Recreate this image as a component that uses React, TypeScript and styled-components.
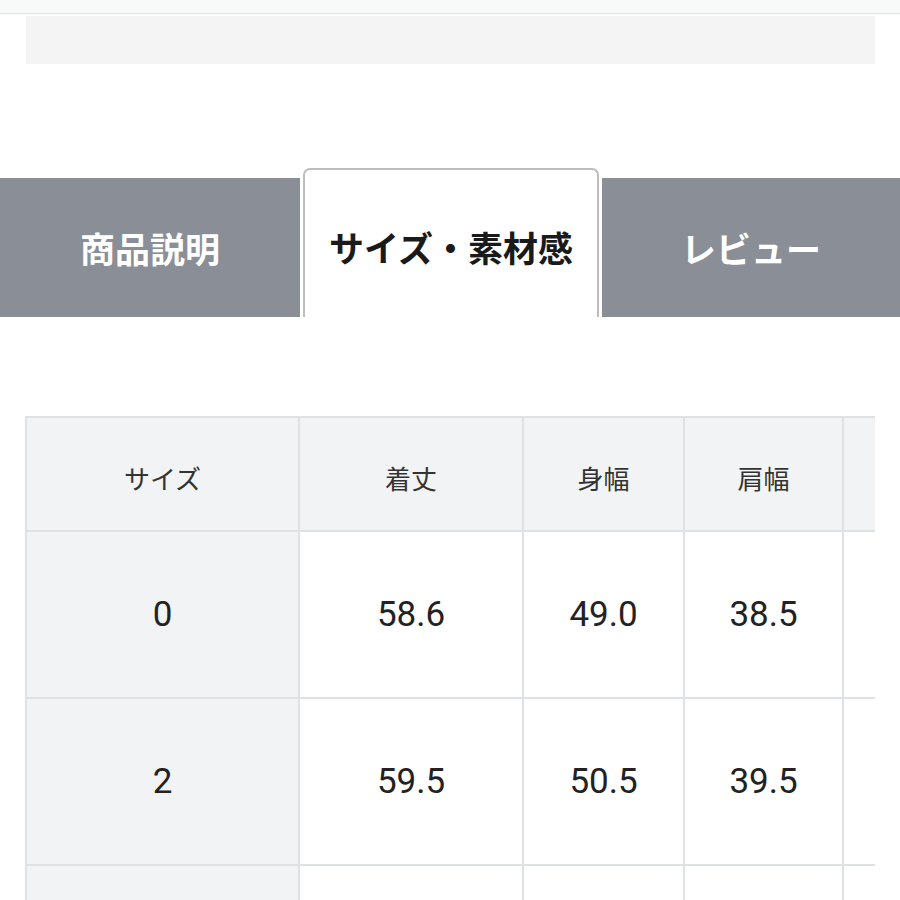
import React from 'react'
import styled, { createGlobalStyle } from 'styled-components'

const GlobalStyle = createGlobalStyle`
  html, body {
    margin: 0;
    padding: 0;
    background: #ffffff;
    font-family: "Noto Sans CJK JP", "Noto Sans", sans-serif;
  }
`

const Page = styled.div`
  width: 900px;
  height: 900px;
  overflow: hidden;
`

const TopBar = styled.div`
  height: 13px;
  background: #f8fafa;
  border-bottom: 1px solid #dfe3e3;
`

const Banner = styled.div`
  margin: 2px 25px 0 26px;
  height: 48px;
  background: #f4f4f4;
`

const TabBar = styled.div`
  margin-top: 104px;
  height: 149px;
  display: grid;
  grid-template-columns: 300px 296px 1fr;
  column-gap: 3px;
  align-items: end;
`

const Tab = styled.div<{ $active?: boolean }>`
  box-sizing: border-box;
  height: ${p => (p.$active ? '149px' : '139px')};
  display: flex;
  align-items: center;
  justify-content: center;
  padding-top: ${p => (p.$active ? '6px' : '0')};
  font-size: 35px;
  font-weight: 700;
  color: ${p => (p.$active ? '#1a1a1a' : '#ffffff')};
  background: ${p => (p.$active ? '#ffffff' : '#8a8e96')};
  border: ${p => (p.$active ? '2px solid #bdbdbd' : 'none')};
  border-bottom: none;
  border-radius: ${p => (p.$active ? '7px 7px 0 0' : '0')};
`

const TableWrap = styled.div`
  margin: 99px 25px 0 25px;
  overflow: hidden;
`

const SizeTable = styled.table`
  border-collapse: collapse;
  table-layout: fixed;
  width: 1100px;
`

const HeadCell = styled.th`
  height: 106px;
  padding: 6px 0 0;
  background: #f2f3f4;
  border: 2px solid #dfe2e5;
  font-size: 26px;
  font-weight: 400;
  color: #333333;
  text-align: center;
  vertical-align: middle;
`

const Cell = styled.td<{ $label?: boolean }>`
  height: 165px;
  padding: 0;
  background: ${p => (p.$label ? '#f2f3f4' : '#ffffff')};
  border: 2px solid #dfe2e5;
  font-family: Roboto, "Liberation Sans", sans-serif;
  font-size: 35px;
  color: #222222;
  text-align: center;
  vertical-align: middle;
`

// the last column and the last row are cut off by the frame, so they hold no text
const columns = ['サイズ', '着丈', '身幅', '肩幅', '']
const widths = [273, 224, 161, 159, 283]
const rows = [
  ['0', '58.6', '49.0', '38.5', ''],
  ['2', '59.5', '50.5', '39.5', ''],
  ['', '', '', '', ''],
]

export default function App() {
  return (
    <Page>
      <GlobalStyle />
      <TopBar />
      <Banner />
      <TabBar>
        <Tab>商品説明</Tab>
        <Tab $active>サイズ・素材感</Tab>
        <Tab>レビュー</Tab>
      </TabBar>
      <TableWrap>
        <SizeTable>
          <colgroup>
            {widths.map((w, i) => (
              <col key={i} style={{ width: w }} />
            ))}
          </colgroup>
          <thead>
            <tr>
              {columns.map((c, i) => (
                <HeadCell key={i}>{c}</HeadCell>
              ))}
            </tr>
          </thead>
          <tbody>
            {rows.map((r, ri) => (
              <tr key={ri}>
                {r.map((v, i) => (
                  <Cell key={i} $label={i === 0}>
                    {v}
                  </Cell>
                ))}
              </tr>
            ))}
          </tbody>
        </SizeTable>
      </TableWrap>
    </Page>
  )
}
